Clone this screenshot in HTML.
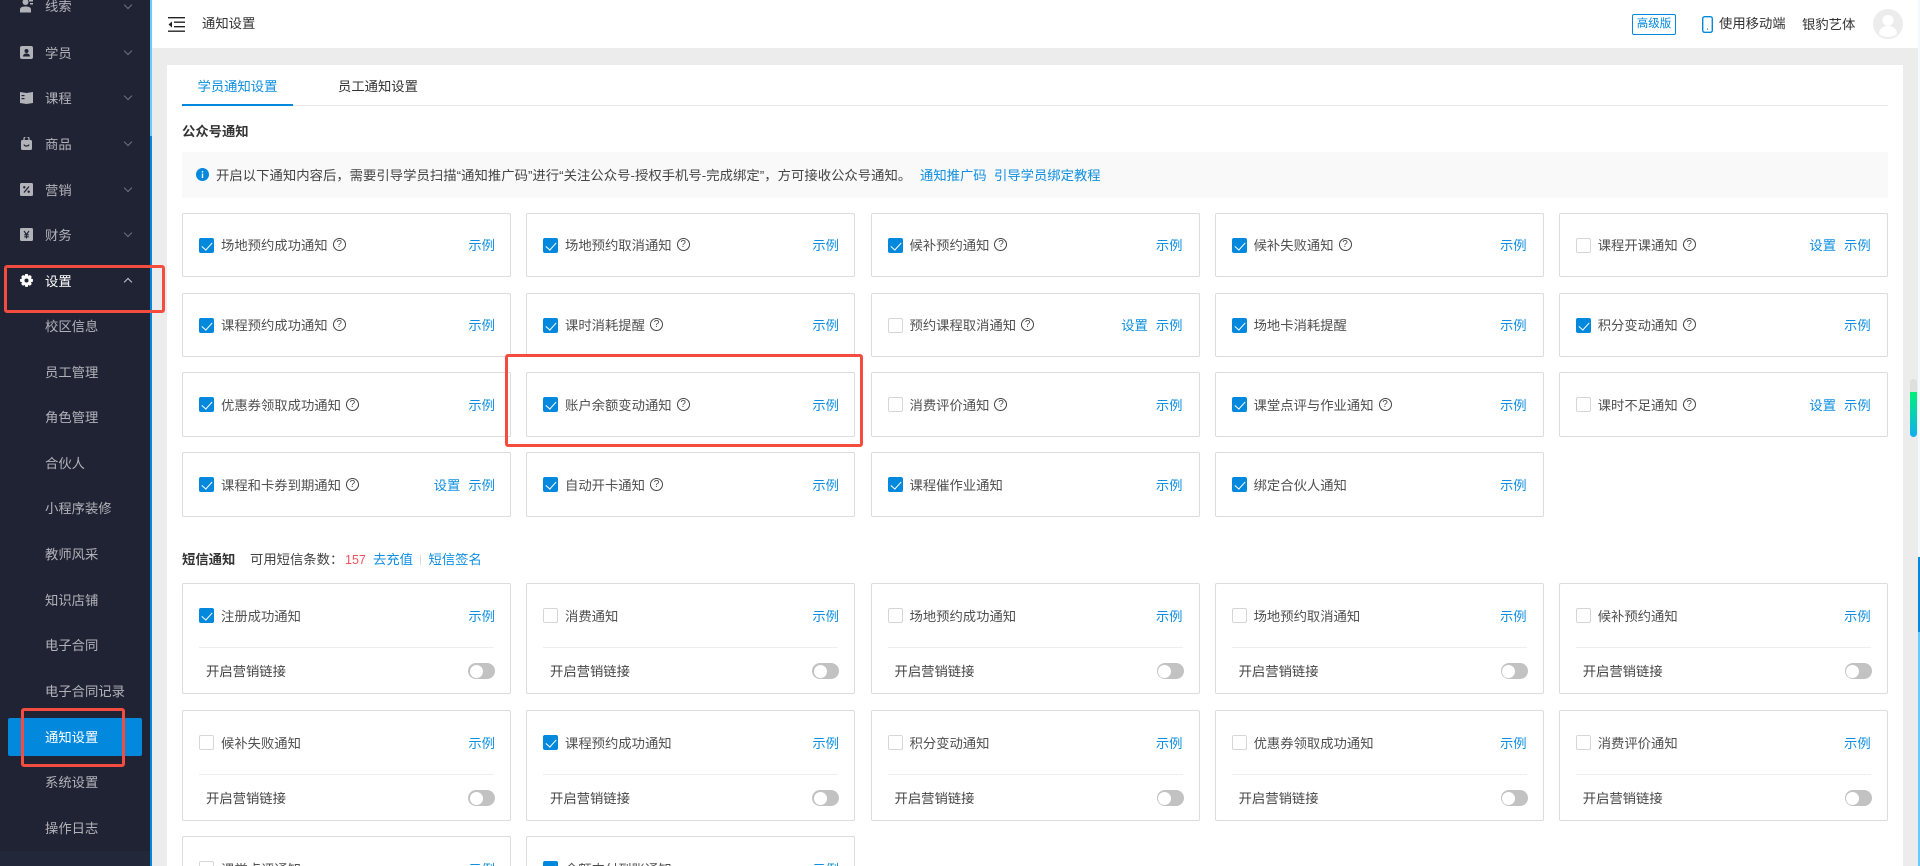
<!DOCTYPE html>
<html lang="zh-CN">
<head>
<meta charset="utf-8">
<title>通知设置</title>
<style>
*{box-sizing:border-box}
html,body{margin:0;padding:0;width:1920px;height:866px;overflow:hidden;background:#ececec}
body{font-family:"Liberation Sans","Noto Sans CJK SC",sans-serif;font-size:13.33px;color:#444}
#root{position:relative;width:1920px;height:866px;overflow:hidden}
a{color:#0f8fe0;text-decoration:none}
.abs{position:absolute;line-height:20px;white-space:nowrap}
#side{position:absolute;left:0;top:0;width:150px;height:866px;background:#1f2334;overflow:hidden}
#side .bot{position:absolute;left:0;top:851px;width:150px;height:15px;background:#23273a}
#side .m{position:absolute;left:45px;line-height:20px;color:#b2b3b9;white-space:nowrap}
#side .ic{position:absolute;left:20px;width:13px;height:13px}
#side .ch{position:absolute;left:125px;width:6px;height:6px;border-right:1.6px solid #6f7280;border-bottom:1.6px solid #6f7280;transform:rotate(45deg)}
#act{position:absolute;left:8px;top:718px;width:134px;height:38px;background:#0288dc;border-radius:2px}
#strip{position:absolute;left:150px;top:0;width:2px;height:866px;background:#0288dc}
#strip i{position:absolute;left:0;top:0;width:2px;height:136px;background:#66ccff}
#head{position:absolute;left:152px;top:0;width:1766px;height:48px;background:#fff}
#panel{position:absolute;left:167px;top:65px;width:1736px;height:801px;background:#fff}
.card{position:absolute;width:329px;height:64px;background:#fff;border:1px solid #dcdcdc;border-radius:2px}
.sms{height:111px}
.c1{left:182px}.c2{left:526px}.c3{left:870.5px}.c4{left:1214.6px}.c5{left:1558.7px}
.c3 .l,.c4 .l,.c5 .l{right:16px}
.cb{position:absolute;left:16px;top:24px;width:15px;height:15px;border:1px solid #d6d6d6;border-radius:2px;background:#fff}
.on{background:#0288dc;border-color:#0288dc}
.on:after{content:"";position:absolute;left:4px;top:1px;width:5px;height:9px;border-right:1.2px solid #fff;border-bottom:1.2px solid #fff;transform:rotate(42deg)}
.t{position:absolute;left:38px;top:22px;line-height:20px;white-space:nowrap;display:flex;align-items:center;color:#505050}
.q{display:inline-block;width:13px;height:13px;margin-left:5px;margin-top:-3px;border:1px solid #444;border-radius:50%;font:normal 10px/11px "Liberation Sans",sans-serif;text-align:center;color:#444}
.l{position:absolute;top:22px;right:15px;line-height:20px;white-space:nowrap}
.l a+a{margin-left:8px}
.r .t,.r .l,.sms .t,.sms .l{top:23px}
.r{height:65px}
.dv{position:absolute;left:16px;width:295px;top:63px;height:1px;background:#eee}
.mk{position:absolute;left:23px;top:78px;line-height:20px;color:#444;white-space:nowrap}
.tg{position:absolute;left:285px;top:79px;width:27px;height:16px;border-radius:8px;background:#c2c2c2}
.tg:after{content:"";position:absolute;left:1.5px;top:1.5px;width:13px;height:13px;border-radius:50%;background:#fff}
.red{position:absolute;border:3px solid #f44c3f;border-radius:3px;background:transparent}
.cut{height:30px;overflow:hidden;border-bottom:0;border-radius:2px 2px 0 0}
</style>
</head>
<body>
<div id="root">

<div id="side">
  <svg class="ic" style="top:0" viewBox="0 0 13 13"><circle cx="5.5" cy="2" r="3" fill="#b2b3b9"/><path d="M0 12.500v-3c0-2 2-3 5.500-3s5.500 1 5.500 3v3z" fill="#b2b3b9"/><rect x="9" y="0" width="4" height="1.500" fill="#b2b3b9"/><rect x="10" y="3" width="3" height="1.500" fill="#b2b3b9"/></svg>
  <div class="m" style="top:-3px;line-height:20px;height:20px">线索</div><i class="ch" style="top:2px"></i>
  <svg class="ic" style="top:46px" viewBox="0 0 13 13"><rect width="13" height="13" rx="2" fill="#b2b3b9"/><circle cx="6.500" cy="5" r="2" fill="#1f2334"/><path d="M3 10.500c0-2 1.500-3 3.500-3s3.500 1 3.500 3z" fill="#1f2334"/></svg>
  <div class="m" style="top:44px">学员</div><i class="ch" style="top:48px"></i>
  <svg class="ic" style="top:91px" viewBox="0 0 13 13"><path d="M0 1l6.500 1L13 1v11l-6.500 1L0 12z" fill="#b2b3b9"/><rect x="1.500" y="4" width="3" height="1.200" fill="#1f2334"/><rect x="1.500" y="7" width="3" height="1.200" fill="#1f2334"/></svg>
  <div class="m" style="top:89px">课程</div><i class="ch" style="top:93px"></i>
  <svg class="ic" style="top:137px" viewBox="0 0 13 13"><path d="M4 3V2a2.500 2.500 0 0 1 5 0v1" fill="none" stroke="#b2b3b9" stroke-width="1.300"/><rect x="1" y="3" width="11" height="10" rx="1.500" fill="#b2b3b9"/><path d="M4 7.500c.5 2 4.500 2 5 0" fill="none" stroke="#1f2334" stroke-width="1.200"/></svg>
  <div class="m" style="top:135px">商品</div><i class="ch" style="top:139px"></i>
  <svg class="ic" style="top:183px" viewBox="0 0 13 13"><rect width="13" height="13" rx="1.500" fill="#b2b3b9"/><path d="M4 9.500L9 3.500" stroke="#1f2334" stroke-width="1.300"/><circle cx="4.300" cy="4.300" r="1.200" fill="#1f2334"/><circle cx="8.700" cy="8.700" r="1.200" fill="#1f2334"/></svg>
  <div class="m" style="top:181px">营销</div><i class="ch" style="top:185px"></i>
  <svg class="ic" style="top:228px" viewBox="0 0 13 13"><rect width="13" height="13" rx="1.500" fill="#b2b3b9"/><path d="M4 3l2.500 3.500L9 3M6.500 6.500V10.500M4.200 6.800h4.600M4.200 8.800h4.600" fill="none" stroke="#1f2334" stroke-width="1.100"/></svg>
  <div class="m" style="top:226px">财务</div><i class="ch" style="top:230px"></i>
  <svg class="ic" style="top:274px" viewBox="0 0 13 13"><path d="M5.200 0h2.600l.5 1.900 1.700-.9 1.800 1.800-.9 1.700 2 .6v2.600l-2 .6.900 1.700-1.800 1.800-1.700-.9-.5 2H5.200l-.5-2-1.700.9-1.800-1.800.9-1.700-2-.6V5.100l2-.6-.9-1.700L3 1l1.700.9z" fill="#fff"/><circle cx="6.500" cy="6.500" r="2" fill="#1f2334"/></svg>
  <div class="m" style="top:272px;color:#fff">设置</div>
  <i class="ch" style="top:279px;transform:rotate(225deg);border-color:#c9c9cf"></i>
  <div class="m" style="top:317px">校区信息</div>
  <div class="m" style="top:363px">员工管理</div>
  <div class="m" style="top:408px">角色管理</div>
  <div class="m" style="top:454px">合伙人</div>
  <div class="m" style="top:499px">小程序装修</div>
  <div class="m" style="top:545px">教师风采</div>
  <div class="m" style="top:591px">知识店铺</div>
  <div class="m" style="top:636px">电子合同</div>
  <div class="m" style="top:682px">电子合同记录</div>
  <div id="act"></div>
  <div class="m" style="top:728px;color:#fff">通知设置</div>
  <div class="m" style="top:773px">系统设置</div>
  <div class="m" style="top:819px">操作日志</div>
  <div class="bot"></div>
</div>
<div id="strip"><i></i></div>

<div id="head"></div>
<svg class="abs" style="left:168px;top:17px" width="17" height="15" viewBox="0 0 17 15"><path d="M0 .7h17M6 5.200h11M6 9.700h11M0 14.200h17" stroke="#222" stroke-width="1.300" fill="none"/><path d="M4 4.500v6L.5 7.500z" fill="#222"/></svg>
<div class="abs" style="left:202px;top:14px;color:#333">通知设置</div>
<div class="abs" style="left:1632px;top:14px;width:44px;height:21px;border:1px solid #0288dc;border-radius:2px;text-align:center;font-size:11.500px;line-height:19px;color:#0288dc">高级版</div>
<svg class="abs" style="left:1702px;top:16px" width="11" height="17" viewBox="0 0 11 17"><rect x=".7" y=".7" width="9.600" height="15.600" rx="2" fill="none" stroke="#0288dc" stroke-width="1.400"/><rect x="5" y="12.500" width="1" height="1.200" fill="#0288dc"/></svg>
<div class="abs" style="left:1719px;top:14px;color:#333">使用移动端</div>
<div class="abs" style="left:1802px;top:15px;color:#333">银豹艺体</div>
<svg class="abs" style="left:1873px;top:9px" width="30" height="30" viewBox="0 0 30 30"><circle cx="15" cy="15" r="15" fill="#ececec"/><circle cx="15" cy="11.500" r="5.500" fill="#fff"/><path d="M6 25c0-5.500 4-8 9-8s9 2.500 9 8c-2.500 2-6 3-9 3s-6.500-1-9-3z" fill="#fff"/></svg>

<div id="panel"></div>
<div class="abs" style="left:197.5px;top:76.500px;color:#0f8fe0">学员通知设置</div>
<div class="abs" style="left:338px;top:76.500px;color:#333">员工通知设置</div>
<div style="position:absolute;left:182px;top:105px;width:1706px;height:1px;background:#eaeaea"></div>
<div style="position:absolute;left:182px;top:104px;width:111px;height:2px;background:#0288dc"></div>

<div class="abs" style="left:182px;top:122px;font-weight:bold;color:#333">公众号通知</div>
<div style="position:absolute;left:182px;top:152px;width:1706px;height:46px;background:#f9f9f9"></div>
<svg class="abs" style="left:196px;top:168px" width="13" height="13" viewBox="0 0 13 13"><circle cx="6.500" cy="6.500" r="6.500" fill="#0288dc"/><rect x="5.800" y="5.500" width="1.400" height="4.500" fill="#fff"/><rect x="5.800" y="3" width="1.400" height="1.500" fill="#fff"/></svg>
<div class="abs" style="left:216px;top:166px;color:#444;letter-spacing:.04px">开启以下通知内容后，需要引导学员扫描“通知推广码”进行“关注公众号-授权手机号-完成绑定”，方可接收公众号通知。</div>
<div class="abs" style="left:920px;top:166px"><a href="#">通知推广码</a></div>
<div class="abs" style="left:994px;top:166px"><a href="#">引导学员绑定教程</a></div>

<!-- row 1 -->
<div class="card c1" style="top:213px"><i class="cb on"></i><div class="t">场地预约成功通知<b class="q">?</b></div><div class="l"><a href="#">示例</a></div></div>
<div class="card c2" style="top:213px"><i class="cb on"></i><div class="t">场地预约取消通知<b class="q">?</b></div><div class="l"><a href="#">示例</a></div></div>
<div class="card c3" style="top:213px"><i class="cb on"></i><div class="t">候补预约通知<b class="q">?</b></div><div class="l"><a href="#">示例</a></div></div>
<div class="card c4" style="top:213px"><i class="cb on"></i><div class="t">候补失败通知<b class="q">?</b></div><div class="l"><a href="#">示例</a></div></div>
<div class="card c5" style="top:213px"><i class="cb"></i><div class="t">课程开课通知<b class="q">?</b></div><div class="l"><a href="#">设置</a><a href="#">示例</a></div></div>
<!-- row 2 -->
<div class="card c1" style="top:293px"><i class="cb on"></i><div class="t">课程预约成功通知<b class="q">?</b></div><div class="l"><a href="#">示例</a></div></div>
<div class="card c2" style="top:293px"><i class="cb on"></i><div class="t">课时消耗提醒<b class="q">?</b></div><div class="l"><a href="#">示例</a></div></div>
<div class="card c3" style="top:293px"><i class="cb"></i><div class="t">预约课程取消通知<b class="q">?</b></div><div class="l"><a href="#">设置</a><a href="#">示例</a></div></div>
<div class="card c4" style="top:293px"><i class="cb on"></i><div class="t">场地卡消耗提醒</div><div class="l"><a href="#">示例</a></div></div>
<div class="card c5" style="top:293px"><i class="cb on"></i><div class="t">积分变动通知<b class="q">?</b></div><div class="l"><a href="#">示例</a></div></div>
<!-- row 3 -->
<div class="card r c1" style="top:372px"><i class="cb on"></i><div class="t">优惠券领取成功通知<b class="q">?</b></div><div class="l"><a href="#">示例</a></div></div>
<div class="card r c2" style="top:372px"><i class="cb on"></i><div class="t">账户余额变动通知<b class="q">?</b></div><div class="l"><a href="#">示例</a></div></div>
<div class="card r c3" style="top:372px"><i class="cb"></i><div class="t">消费评价通知<b class="q">?</b></div><div class="l"><a href="#">示例</a></div></div>
<div class="card r c4" style="top:372px"><i class="cb on"></i><div class="t">课堂点评与作业通知<b class="q">?</b></div><div class="l"><a href="#">示例</a></div></div>
<div class="card r c5" style="top:372px"><i class="cb"></i><div class="t">课时不足通知<b class="q">?</b></div><div class="l"><a href="#">设置</a><a href="#">示例</a></div></div>
<!-- row 4 -->
<div class="card r c1" style="top:452px"><i class="cb on"></i><div class="t">课程和卡券到期通知<b class="q">?</b></div><div class="l"><a href="#">设置</a><a href="#">示例</a></div></div>
<div class="card r c2" style="top:452px"><i class="cb on"></i><div class="t">自动开卡通知<b class="q">?</b></div><div class="l"><a href="#">示例</a></div></div>
<div class="card r c3" style="top:452px"><i class="cb on"></i><div class="t">课程催作业通知</div><div class="l"><a href="#">示例</a></div></div>
<div class="card r c4" style="top:452px"><i class="cb on"></i><div class="t">绑定合伙人通知</div><div class="l"><a href="#">示例</a></div></div>

<!-- SMS -->
<div class="abs" style="left:182px;top:550px;font-weight:bold;color:#333">短信通知</div>
<div class="abs" style="left:250px;top:550px;color:#444">可用短信条数：</div>
<div class="abs" style="left:345px;top:550px;color:#f0505a;font-size:12.500px">157</div>
<div class="abs" style="left:373px;top:550px"><a href="#">去充值</a></div>
<div style="position:absolute;left:420px;top:555px;width:1px;height:10px;background:#dcdcdc"></div>
<div class="abs" style="left:428.5px;top:550px"><a href="#">短信签名</a></div>

<div class="card sms c1" style="top:583px"><i class="cb on"></i><div class="t">注册成功通知</div><div class="l"><a href="#">示例</a></div><div class="dv"></div><div class="mk">开启营销链接</div><div class="tg"></div></div>
<div class="card sms c2" style="top:583px"><i class="cb"></i><div class="t">消费通知</div><div class="l"><a href="#">示例</a></div><div class="dv"></div><div class="mk">开启营销链接</div><div class="tg"></div></div>
<div class="card sms c3" style="top:583px"><i class="cb"></i><div class="t">场地预约成功通知</div><div class="l"><a href="#">示例</a></div><div class="dv"></div><div class="mk">开启营销链接</div><div class="tg"></div></div>
<div class="card sms c4" style="top:583px"><i class="cb"></i><div class="t">场地预约取消通知</div><div class="l"><a href="#">示例</a></div><div class="dv"></div><div class="mk">开启营销链接</div><div class="tg"></div></div>
<div class="card sms c5" style="top:583px"><i class="cb"></i><div class="t">候补预约通知</div><div class="l"><a href="#">示例</a></div><div class="dv"></div><div class="mk">开启营销链接</div><div class="tg"></div></div>

<div class="card sms c1" style="top:710px"><i class="cb"></i><div class="t">候补失败通知</div><div class="l"><a href="#">示例</a></div><div class="dv"></div><div class="mk">开启营销链接</div><div class="tg"></div></div>
<div class="card sms c2" style="top:710px"><i class="cb on"></i><div class="t">课程预约成功通知</div><div class="l"><a href="#">示例</a></div><div class="dv"></div><div class="mk">开启营销链接</div><div class="tg"></div></div>
<div class="card sms c3" style="top:710px"><i class="cb"></i><div class="t">积分变动通知</div><div class="l"><a href="#">示例</a></div><div class="dv"></div><div class="mk">开启营销链接</div><div class="tg"></div></div>
<div class="card sms c4" style="top:710px"><i class="cb"></i><div class="t">优惠券领取成功通知</div><div class="l"><a href="#">示例</a></div><div class="dv"></div><div class="mk">开启营销链接</div><div class="tg"></div></div>
<div class="card sms c5" style="top:710px"><i class="cb"></i><div class="t">消费评价通知</div><div class="l"><a href="#">示例</a></div><div class="dv"></div><div class="mk">开启营销链接</div><div class="tg"></div></div>

<div class="card sms cut c1" style="top:836px"><i class="cb"></i><div class="t">课堂点评通知</div><div class="l"><a href="#">示例</a></div></div>
<div class="card sms cut c2" style="top:836px"><i class="cb on"></i><div class="t">余额支付到账通知</div><div class="l"><a href="#">示例</a></div></div>

<!-- right edge -->
<div style="position:absolute;left:1918px;top:0;width:2px;height:557px;background:#f3f9fd"></div>
<div style="position:absolute;left:1918px;top:557px;width:2px;height:75px;background:#0288dc"></div>
<div style="position:absolute;left:1918px;top:632px;width:2px;height:234px;background:#66ccff"></div>
<div style="position:absolute;left:1910px;top:379px;width:7px;height:14px;border-radius:4px 4px 0 0;background:#dedede"></div>
<div style="position:absolute;left:1910px;top:392px;width:7px;height:45px;border-radius:0 0 4px 4px;background:linear-gradient(#00f07a,#12aef0)"></div>

<!-- red annotations -->
<div class="red" style="left:4px;top:265px;width:161px;height:48px"></div>
<div class="red" style="left:21px;top:708px;width:104px;height:59px"></div>
<div class="red" style="left:505px;top:354px;width:358px;height:93px"></div>

</div>
</body>
</html>
